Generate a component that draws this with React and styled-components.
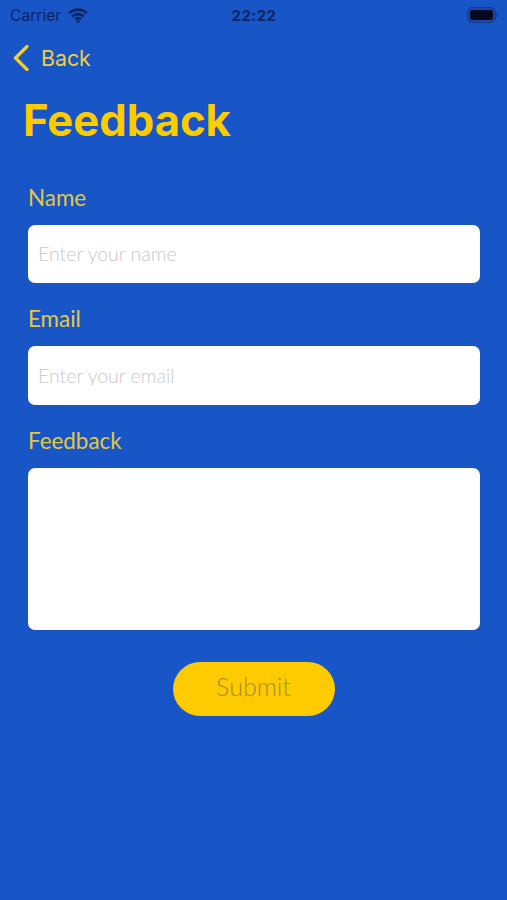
import React from "react";
import styled, { createGlobalStyle } from "styled-components";

const Global = createGlobalStyle`
  html, body { margin: 0; padding: 0; background: #1855c6; }
  * { box-sizing: border-box; }
`;

const Screen = styled.main`
  width: 507px;
  height: 900px;
  background: #1855c6;
  overflow: hidden;
  display: flex;
  flex-direction: column;
`;

const StatusBar = styled.div`
  height: 30px;
  display: grid;
  grid-template-columns: 1fr auto 1fr;
  align-items: center;
  padding: 0 9px 0 10px;
  color: #0b2563;
  font-family: Inter, "Liberation Sans", sans-serif;
`;

const Carrier = styled.div`
  display: flex;
  align-items: center;
  gap: 7px;
  font-size: 15.6px;
`;

const Clock = styled.div`
  font-size: 15px;
  font-weight: 700;
  letter-spacing: 0.4px;
`;

const BatterySlot = styled.div`
  display: flex;
  justify-content: flex-end;
`;

const BackRow = styled.div`
  margin-top: 12px;
  height: 32px;
  display: flex;
  align-items: center;
  gap: 12px;
  padding-left: 13px;
  color: #f0cf3a;
  font-family: Inter, "Liberation Sans", sans-serif;
  font-size: 21.3px;
`;

const Title = styled.h1`
  margin: 22px 0 0;
  padding-left: 23px;
  color: #fccb00;
  font-family: Inter, "Liberation Sans", sans-serif;
  font-size: 43.6px;
  font-weight: 700;
  line-height: 50px;
  letter-spacing: 0;
`;

const Form = styled.form`
  margin-top: 35.5px;
  padding: 0 28px;
  display: flex;
  flex-direction: column;
`;

const Field = styled.label`
  display: flex;
  flex-direction: column;
  margin-bottom: 20px;
`;

const LabelText = styled.span`
  height: 43px;
  padding-top: 2px;
  line-height: 28px;
  color: #e3c93f;
  font-family: Lato, "Open Sans", sans-serif;
  font-size: 22.4px;
`;

const TextInput = styled.input`
  width: 452px;
  height: 58.5px;
  border: none;
  outline: none;
  border-radius: 7px;
  background: #fff;
  padding: 0 10px;
  font-family: Lato, "Open Sans", sans-serif;
  font-size: 19.5px;
  font-weight: 300;
  &::placeholder { color: #c9c9cc; opacity: 1; }
`;

const TextArea = styled.textarea`
  display: block;
  width: 452px;
  height: 162px;
  border: none;
  outline: none;
  resize: none;
  border-radius: 7px;
  background: #fff;
`;

const SubmitRow = styled.div`
  margin-top: 12px;
  display: flex;
  justify-content: center;
`;

const Submit = styled.button`
  width: 162px;
  height: 54px;
  border: none;
  border-radius: 27px;
  background: #fdcb00;
  color: #a88c38;
  font-family: Lato, "Open Sans", sans-serif;
  font-size: 25px;
  font-weight: 300;
  padding: 0 0 5px;
`;

export default function App() {
  return (
    <Screen>
      <Global />
      <StatusBar>
        <Carrier>
          Carrier
          <svg width="20" height="15" viewBox="0 0 20 15" fill="none" stroke="#0b2563" strokeWidth="2.6">
            <path d="M1.2 5.2a12.6 12.6 0 0 1 17.6 0" />
            <path d="M4.3 8.4a8.2 8.2 0 0 1 11.4 0" />
            <path d="M7.2 11.3a4 4 0 0 1 5.6 0" />
            <circle cx="10" cy="13.4" r="1.5" fill="#0b2563" stroke="none" />
          </svg>
        </Carrier>
        <Clock>22:22</Clock>
        <BatterySlot>
          <svg width="31" height="16" viewBox="0 0 31 16">
            <rect x="0.5" y="0.5" width="28" height="15" rx="4.5" fill="#1a48a6" stroke="#123a8e" />
            <rect x="3" y="3" width="23" height="10" rx="2.5" fill="#050a1c" />
            <rect x="29.5" y="6" width="1.5" height="4" rx="0.7" fill="#123a8e" />
          </svg>
        </BatterySlot>
      </StatusBar>
      <BackRow>
        <svg width="16" height="26" viewBox="0 0 16 26" fill="none" stroke="#f6cf2a" strokeWidth="3.2" strokeLinecap="round" strokeLinejoin="round">
          <path d="M14 1.5 L2.5 13 L14 24.5" />
        </svg>
        Back
      </BackRow>
      <Title>Feedback</Title>
      <Form>
        <Field>
          <LabelText>Name</LabelText>
          <TextInput placeholder="Enter your name" />
        </Field>
        <Field>
          <LabelText>Email</LabelText>
          <TextInput placeholder="Enter your email" />
        </Field>
        <Field>
          <LabelText>Feedback</LabelText>
          <TextArea />
        </Field>
        <SubmitRow>
          <Submit type="button">Submit</Submit>
        </SubmitRow>
      </Form>
    </Screen>
  );
}
